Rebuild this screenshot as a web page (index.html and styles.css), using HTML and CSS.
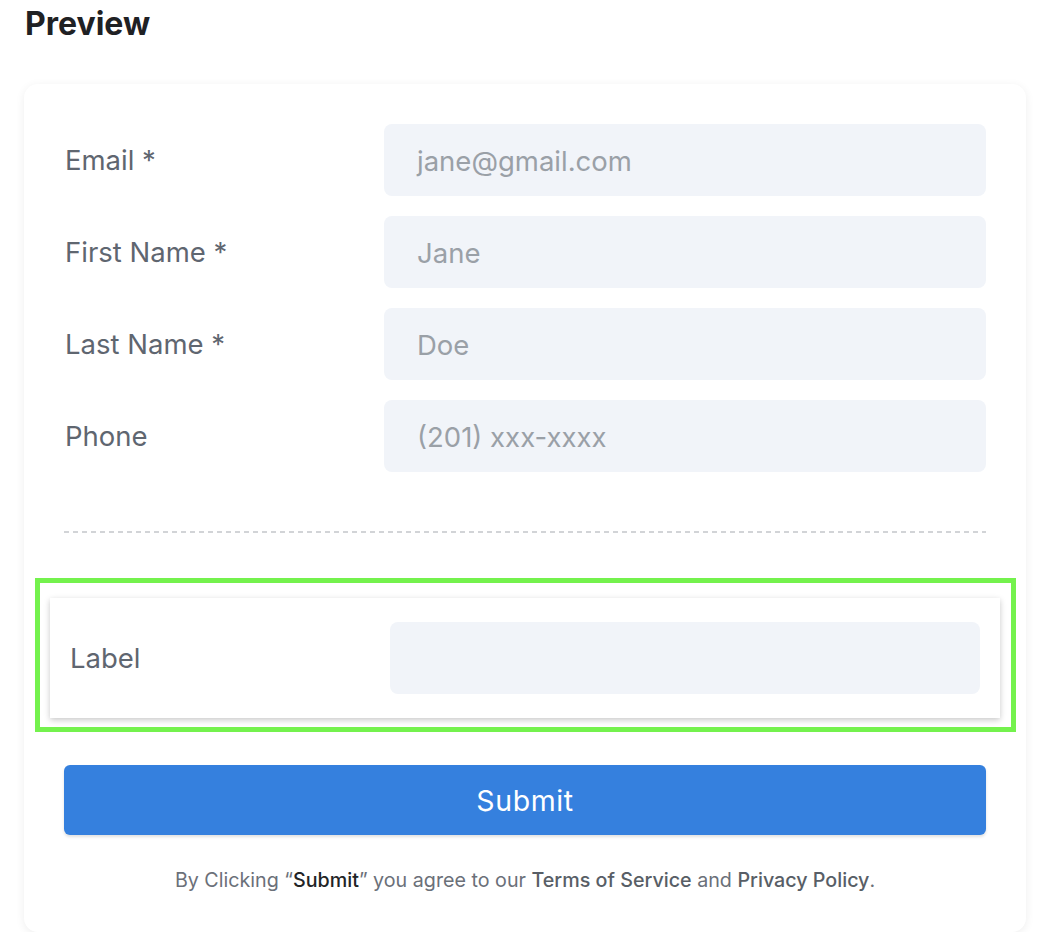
FILE: index.html
```html
<!DOCTYPE html>
<html>
<head>
<meta charset="utf-8">
<link rel="stylesheet" href="styles.css">
</head>
<body>
<h1 class="title">Preview</h1>
<div class="card">
  <div class="row">
    <label class="label">Email *</label>
    <div class="input placeholder">jane@gmail.com</div>
  </div>
  <div class="row">
    <label class="label">First Name *</label>
    <div class="input placeholder">Jane</div>
  </div>
  <div class="row">
    <label class="label">Last Name *</label>
    <div class="input placeholder">Doe</div>
  </div>
  <div class="row">
    <label class="label">Phone</label>
    <div class="input placeholder">(201) xxx-xxxx</div>
  </div>
  <div class="divider"></div>
  <div class="selected">
    <div class="drag-row">
      <label class="label drag-label">Label</label>
      <div class="input drag-input"></div>
    </div>
  </div>
  <button class="submit">Submit</button>
  <p class="terms">By Clicking “<b class="dark">Submit</b>” you agree to our <b>Terms of Service</b> and <b>Privacy Policy</b>.</p>
</div>
</body>
</html>
```
FILE: styles.css
```css
* { box-sizing: border-box; }
html, body { margin: 0; background: #ffffff; }
body {
  font-family: Inter, "Noto Sans", sans-serif;
  padding: 0 20px 0 24px;
  color: #5f6670;
}
.title {
  margin: 0;
  padding: 4px 0 0 1px;
  font-size: 32px;
  line-height: 40px;
  font-weight: 700;
  color: #1f2124;
}
.card {
  margin-top: 40px;
  background: #fff;
  border-radius: 14px;
  box-shadow: 0 2px 10px rgba(0,0,0,0.07);
  padding: 40px 40px 40px;
}
.row {
  display: flex;
  align-items: center;
  margin-bottom: 20px;
}
.label {
  width: 320px;
  flex: none;
  font-size: 27.5px;
  color: #5f6670;
  padding-left: 1px;
  padding-bottom: 1px;
}
.input {
  flex: 1;
  height: 72px;
  background: #f1f4f9;
  border-radius: 8px;
  display: flex;
  align-items: center;
  padding-left: 33px;
  padding-top: 2px;
  font-size: 27.5px;
}
.placeholder { color: #9aa0a7; }
.divider {
  height: 2px;
  margin: 59px 0 45px;
  background: repeating-linear-gradient(90deg, #d2d4d7 0 5px, transparent 5px 9px);
}
.selected {
  margin: 0 -30px 0 -29px;
  border: 5px solid #74f24d;
  padding: 15px 11px 9px 10px;
}
.drag-row {
  display: flex;
  align-items: center;
  background: #fff;
  box-shadow: 0 2px 6px rgba(0,0,0,0.22);
  padding: 24px 20px 24px 20px;
}
.drag-label { width: 320px; padding-left: 0; }
.submit {
  display: block;
  width: 100%;
  margin-top: 33px;
  height: 70px;
  border: none;
  border-radius: 6px;
  background: #3580de;
  color: #fff;
  font-family: Inter, "Noto Sans", sans-serif;
  font-size: 28.5px;
  letter-spacing: 0.6px;
  box-shadow: 0 2px 3px rgba(0,0,0,0.12);
}
.terms {
  margin: 33px 0 0;
  text-align: center;
  font-size: 19.7px;
  color: #6b7079;
}
.terms b { font-weight: 500; color: #585e66; }
.terms b.dark { color: #222426; }
```
